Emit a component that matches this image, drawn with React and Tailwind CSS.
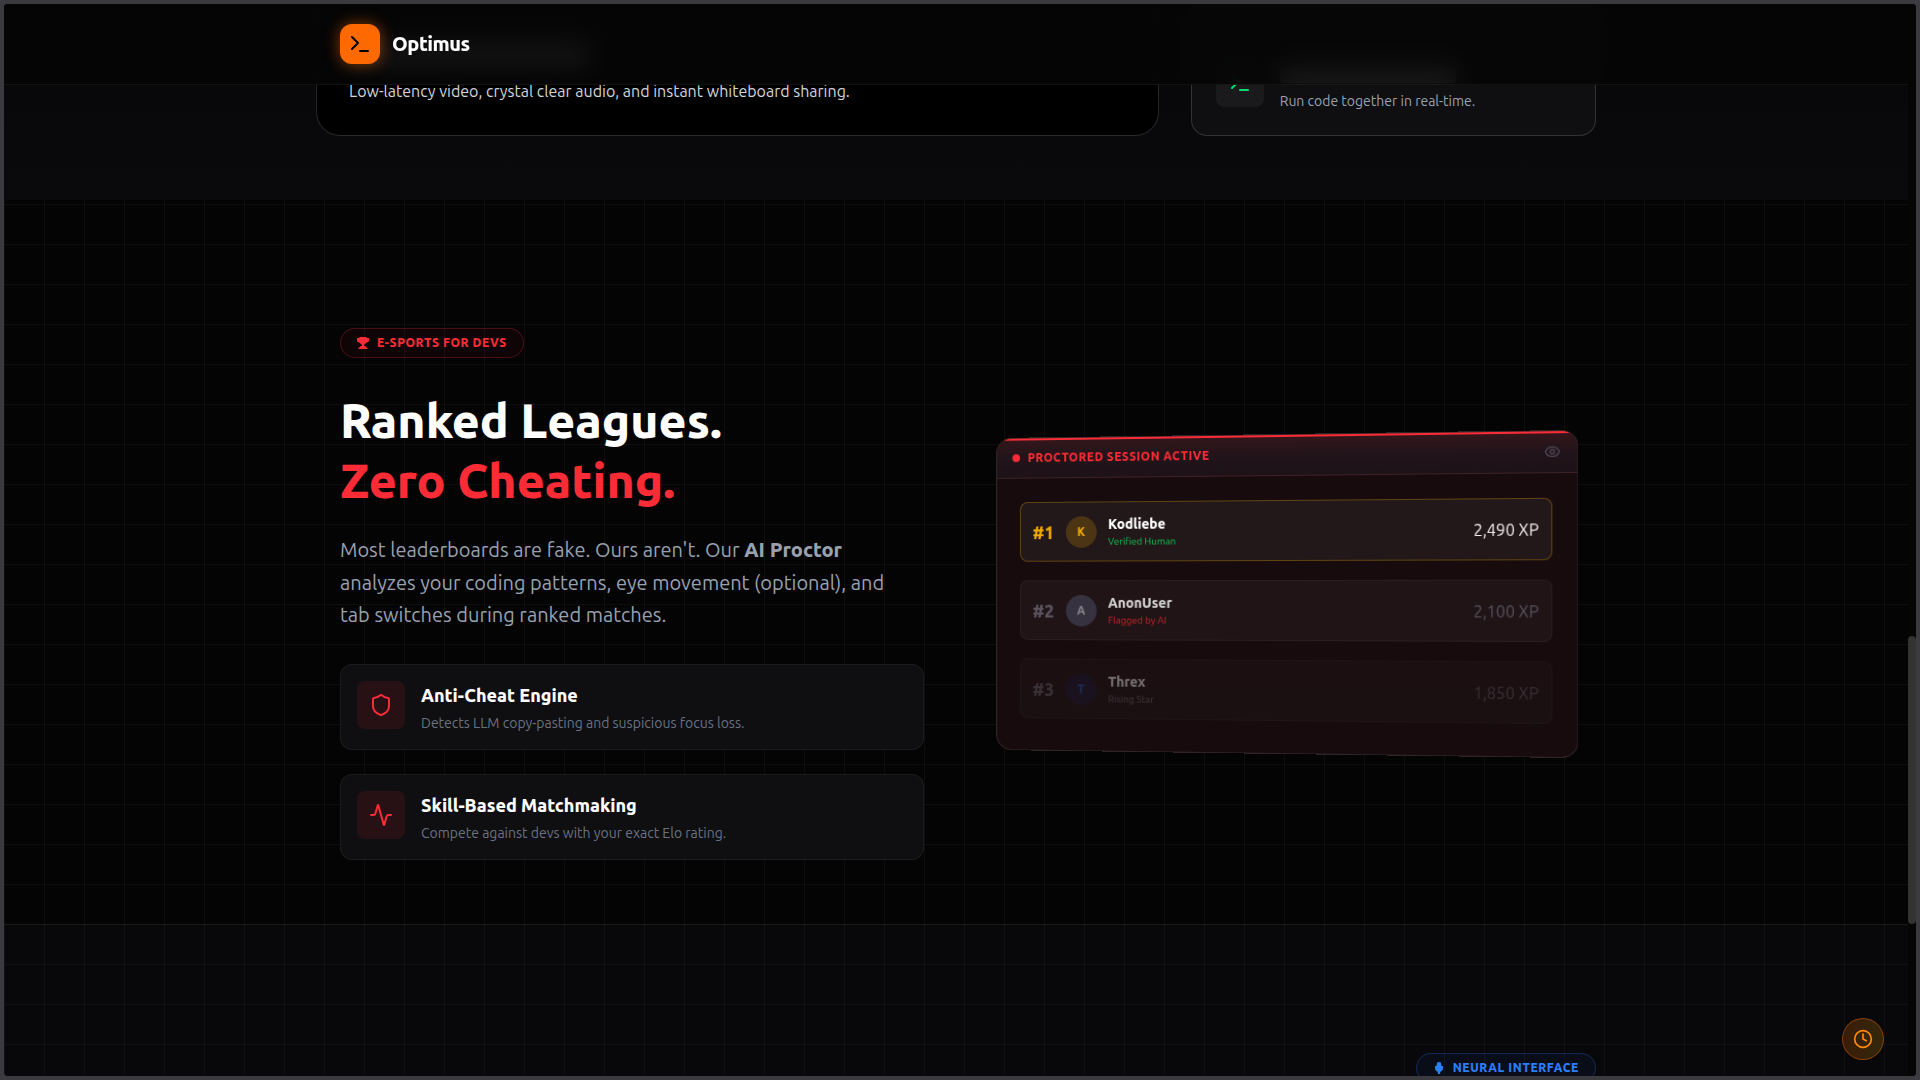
import React from 'react';
import { Terminal, Shield, Activity, Eye, Clock } from 'lucide-react';

const features = [
  {
    icon: Shield,
    title: 'Anti-Cheat Engine',
    text: 'Detects LLM copy-pasting and suspicious focus loss.',
  },
  {
    icon: Activity,
    title: 'Skill-Based Matchmaking',
    text: 'Compete against devs with your exact Elo rating.',
  },
];

const players = [
  {
    rank: '#1',
    name: 'Kodliebe',
    note: 'Verified Human',
    xp: '2,490 XP',
    row: 'border-yellow-500/30',
    rankColor: 'text-[#f0a800]',
    avatar: 'bg-yellow-500/20 text-[#f0a800]',
    noteColor: 'text-[#12c455]',
    xpColor: 'text-[#f4eef0]',
  },
  {
    rank: '#2',
    name: 'AnonUser',
    note: 'Flagged by AI',
    xp: '2,100 XP',
    row: 'border-white/5 opacity-80',
    rankColor: 'text-[#6d6774]',
    avatar: 'bg-[#3f3c4c] text-[#a09daa]',
    noteColor: 'text-[#fb2c36]',
    xpColor: 'text-[#696370]',
  },
  {
    rank: '#3',
    name: 'Threx',
    note: 'Rising Star',
    xp: '1,850 XP',
    row: 'border-white/5 opacity-40',
    rankColor: 'text-[#6d6774]',
    avatar: 'bg-[#1f1e3a] text-[#2a5cb8]',
    noteColor: 'text-[#7a7480]',
    xpColor: 'text-[#696370]',
  },
];

function TrophyIcon() {
  return (
    <svg viewBox="0 0 12 12" className="h-3 w-3 shrink-0" fill="currentColor" aria-hidden="true">
      <path d="M2.5 0h7v1H12v2.2C12 4.4 10.6 5.6 9 6 8.3 7 7.6 7.5 7 7.7V9h1.5l1 1.4h1V12h-9v-1.6h1l1-1.4H5V7.7C4.4 7.5 3.7 7 3 6 1.4 5.6 0 4.4 0 3.2V1h2.5z" />
    </svg>
  );
}

function MicIcon() {
  return (
    <svg viewBox="0 0 12 12" className="h-3 w-3 shrink-0" fill="currentColor" aria-hidden="true">
      <path d="M6 0a2.3 2.3 0 0 1 2.3 2.3V4H10v2.2C10 8 8.8 9.3 7.200 9.700V12H4.800V9.700C3.200 9.300 2 8 2 6.200V4h1.700V2.300A2.300 2.300 0 0 1 6 0z" />
    </svg>
  );
}

function Header() {
  return (
    <header className="absolute inset-x-0 top-0 z-20 border-b border-white/5 bg-[#050505]/90 backdrop-blur-md">
      <div className="mx-auto flex h-20 max-w-7xl items-center px-6">
        <a href="#" className="flex items-center gap-3">
          <span className="flex h-10 w-10 items-center justify-center rounded-xl bg-[#ff6a00] text-black shadow-[0_0_15px_rgba(255,106,0,0.5)]">
            <Terminal className="h-6 w-6" />
          </span>
          <span className="text-xl font-extrabold tracking-tight">Optimus</span>
        </a>
      </div>
    </header>
  );
}

function Collaboration() {
  return (
    <section className="bg-linear-to-b from-[#070709] to-[#0a0a0c] pb-16">
      <div className="mx-auto grid min-h-33 max-w-7xl grid-cols-3 gap-8">
        <div className="col-span-2 flex flex-col justify-end rounded-b-3xl border-x border-b border-white/15 bg-linear-to-b from-[#060606] to-black p-8">
          {/* heading sits under the blurred nav */}
          <div className="mb-3 h-6 w-60 rounded bg-white/60" />
          <p className="text-base text-gray-300">
            Low-latency video, crystal clear audio, and instant whiteboard sharing.
          </p>
        </div>
        <div className="flex items-end rounded-b-2xl border-x border-b border-white/15 bg-[#0f0f11] p-6">
          <div className="flex items-start gap-4">
            <span className="flex h-12 w-12 items-center justify-center rounded-lg bg-[#1a1a1d] text-[#00e070]">
              <Terminal className="h-6 w-6" />
            </span>
            <div>
              <div className="mb-2 mt-2 h-4 w-44 rounded bg-white/70" />
              <p className="text-sm text-gray-400">Run code together in real-time.</p>
            </div>
          </div>
        </div>
      </div>
    </section>
  );
}

function Leaderboard() {
  return (
    <div className="perspective-[1000px]">
      <div className="relative overflow-hidden rounded-2xl border border-white/10 bg-[#170b0d] transform-[rotateY(-5deg)]">
        <div className="absolute inset-x-0 top-0 h-0.5 bg-red-500" />
        <div className="flex items-center justify-between border-b border-white/5 bg-linear-to-b from-[#35161b] via-[#21141a] to-[#1d1217] px-4 py-3">
          <div className="flex items-center gap-2 text-red-500">
            <span className="h-2 w-2 rounded-full bg-red-500" />
            <span className="text-xs font-extrabold uppercase tracking-wider">Proctored Session Active</span>
          </div>
          <Eye className="h-4 w-4 text-[#4f4756]" />
        </div>
        <ol className="flex flex-col gap-[19px] px-6 pb-8 pt-6">
          {players.map((p) => (
            <li
              key={p.rank}
              className={`flex items-center gap-3 rounded-lg border bg-white/5 p-3 ${p.row}`}
            >
              <span className={`text-lg font-extrabold leading-6 ${p.rankColor}`}>{p.rank}</span>
              <span
                className={`flex h-8 w-8 items-center justify-center rounded-full text-xs font-extrabold ${p.avatar}`}
              >
                {p.name[0]}
              </span>
              <div className="flex flex-1 flex-col">
                <p className="text-sm font-extrabold leading-5">{p.name}</p>
                <p className={`text-[10px] leading-[15px] ${p.noteColor}`}>{p.note}</p>
              </div>
              <span className={`text-base ${p.xpColor}`}>{p.xp}</span>
            </li>
          ))}
        </ol>
      </div>
    </div>
  );
}

function RankedLeagues() {
  return (
    <section className="border-b border-white/5 pb-16 pt-32">
      <div className="mx-auto grid max-w-7xl grid-cols-2 items-center gap-16 px-6">
        <div>
          <div className="mb-8 inline-flex items-center gap-2 rounded-full border border-red-500/25 bg-red-500/5 px-4 py-1.5 text-red-500">
            <TrophyIcon />
            <span className="text-xs font-extrabold uppercase tracking-wider">E-Sports for Devs</span>
          </div>
          <h2 className="mb-6 text-5xl font-extrabold leading-tight">
            Ranked Leagues.
            <br />
            <span className="text-red-500">Zero Cheating.</span>
          </h2>
          <p className="mb-8 max-w-[568px] text-xl leading-relaxed text-gray-400">
            Most leaderboards are fake. Ours aren't. Our <strong className="font-extrabold">AI Proctor</strong>{' '}
            analyzes your coding patterns, eye movement (optional), and tab switches during ranked matches.
          </p>
          <div className="flex flex-col gap-6">
            {features.map(({ icon: Icon, title, text }) => (
              <div
                key={title}
                className="flex items-start gap-4 rounded-xl border border-white/5 bg-[#0f0f11] p-4"
              >
                <span className="flex h-12 w-12 shrink-0 items-center justify-center rounded-lg bg-red-500/10 text-red-500">
                  <Icon className="h-6 w-6" />
                </span>
                <div>
                  <h3 className="mb-1 text-lg font-extrabold">{title}</h3>
                  <p className="text-sm text-gray-500">{text}</p>
                </div>
              </div>
            ))}
          </div>
        </div>
        <Leaderboard />
      </div>
    </section>
  );
}

function NeuralInterface() {
  return (
    <section className="bg-[#1a1a28]/20 pb-16 pt-32">
      <div className="mx-auto flex max-w-7xl justify-end">
        <div className="inline-flex items-center gap-2 rounded-full border border-blue-500/25 bg-blue-500/5 px-4 py-1.5 text-blue-500">
          <MicIcon />
          <span className="text-xs font-extrabold uppercase tracking-wider">Neural Interface</span>
        </div>
      </div>
    </section>
  );
}

export default function App() {
  return (
    <div className="h-screen bg-[#3b3a3f] p-1 font-['Ubuntu','Noto_Sans',sans-serif] text-white">
      <div className="flex h-full overflow-hidden rounded bg-[#040404]">
        <div className="relative min-w-0 flex-1 overflow-hidden bg-[linear-gradient(to_right,rgba(255,255,255,0.04)_1px,transparent_1px),linear-gradient(to_bottom,rgba(255,255,255,0.04)_1px,transparent_1px)] bg-size-[40px_40px]">
          <Header />
          <main>
            <Collaboration />
            <RankedLeagues />
            <NeuralInterface />
          </main>
          <button
            type="button"
            aria-label="History"
            className="absolute bottom-4 right-6 flex h-[42px] w-[42px] items-center justify-center rounded-full border border-orange-500/40 bg-linear-to-r from-[#3a1c08] to-[#33270a] text-[#ff8a00]"
          >
            <Clock className="h-5 w-5" />
          </button>
        </div>
        <div className="flex w-2 flex-col bg-[#050505]">
          <div className="grow-[632]" />
          <div className="grow-[288] rounded bg-[#333333]" />
          <div className="grow-[152]" />
        </div>
      </div>
    </div>
  );
}
